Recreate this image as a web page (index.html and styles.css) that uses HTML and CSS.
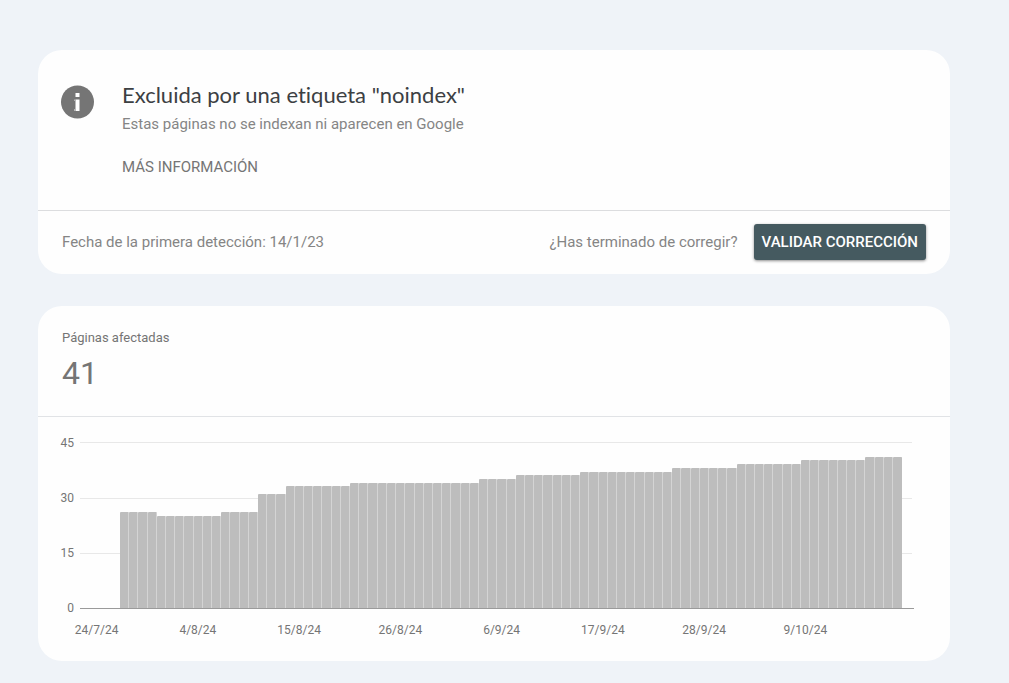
FILE: index.html
```html
<!DOCTYPE html>
<html lang="es">
<head>
<meta charset="utf-8">
<meta name="viewport" content="width=device-width, initial-scale=1">
<title>Excluida por una etiqueta "noindex"</title>
<link rel="stylesheet" href="styles.css">
</head>
<body>
<main class="page">
  <section class="card">
    <div class="issue">
      <svg class="issue-icon" viewBox="0 0 34 34" aria-hidden="true">
        <circle cx="16.5" cy="17" r="16.5" fill="#757575"/>
        <path d="M14.500 8h4v4h-4zM14.500 14.500h4V26h-4z" fill="#fff"/>
        <path d="M13 14.500h1.500V16H13zM13 24h1.500v2H13z" fill="#b5b5b5"/>
      </svg>
      <div class="issue-text">
        <h1 class="issue-title">Excluida por una etiqueta "noindex"</h1>
        <p class="issue-description">Estas páginas no se indexan ni aparecen en Google</p>
        <a class="more-link" href="#">MÁS INFORMACIÓN</a>
      </div>
    </div>
    <div class="validation">
      <span class="detected">Fecha de la primera detección: 14/1/23</span>
      <span>¿Has terminado de corregir?</span>
      <button class="validate-button" type="button">VALIDAR CORRECCIÓN</button>
    </div>
  </section>

  <section class="card">
    <div class="summary">
      <h2 class="summary-label">Páginas afectadas</h2>
      <p class="summary-value">41</p>
    </div>
    <div class="chart">
      <div class="chart-main">
        <div class="y-axis"><span>45</span><span>30</span><span>15</span><span>0</span></div>
        <div class="plot">
          <div class="bars" id="bars"></div>
        </div>
      </div>
      <div class="x-axis">
        <span>24/7/24</span><span>4/8/24</span><span>15/8/24</span><span>26/8/24</span>
        <span>6/9/24</span><span>17/9/24</span><span>28/9/24</span><span>9/10/24</span>
      </div>
    </div>
  </section>
</main>
<script src="chart.js"></script>
</body>
</html>
```
FILE: styles.css
```css
* {
  box-sizing: border-box;
}

body {
  margin: 0;
  background: #eff3f8;
  color: #757575;
  font-family: Roboto, "Liberation Sans", sans-serif;
  font-size: 15px;
  line-height: 20px;
}

h1, h2, p {
  margin: 0;
  font-weight: 400;
}

.page {
  display: flex;
  flex-direction: column;
  gap: 32px;
  padding: 50px 59px 22px 38px;
}

.card {
  background: #fefefe;
  border-radius: 24px;
}

.issue {
  display: flex;
  gap: 27px;
  padding: 32px 23px 33px;
  border-bottom: 1px solid #dcdddf;
}

.issue-icon {
  flex: none;
  width: 34px;
  height: 34px;
  margin-top: 3px;
}

.issue-title {
  color: #3c4043;
  font-family: Lato, Roboto, sans-serif;
  font-size: 22px;
  font-variant-ligatures: none;
  line-height: 26px;
}

.issue-description {
  margin-top: 6px;
  color: #858585;
}

.more-link {
  display: inline-block;
  margin-top: 23px;
  color: #757575;
  text-decoration: none;
}

.validation {
  display: flex;
  align-items: center;
  gap: 16px;
  padding: 13px 24px 14px;
  color: #858585;
}

.detected {
  flex: 1;
}

.validate-button {
  height: 36px;
  padding: 0 8px;
  border: 0;
  border-radius: 3px;
  background: #455a60;
  box-shadow: 0 1px 3px rgba(0, 0, 0, 0.45);
  color: #fff;
  font: 500 15px/34px Roboto, sans-serif;
}

.summary {
  padding: 22px 24px 23px;
  border-bottom: 1px solid #e1e3e6;
}

.summary-label {
  font-size: 13px;
}

.summary-value {
  margin-top: 5px;
  font-size: 32px;
  line-height: 40px;
}

.chart {
  padding: 16px 0 21px;
  font-size: 12px;
}

.chart-main {
  display: flex;
  gap: 6px;
  padding: 0 36px 0 16px;
}

.y-axis {
  display: flex;
  flex-direction: column;
  justify-content: space-between;
  width: 20px;
  text-align: right;
}

.plot {
  display: flex;
  flex: 1;
  height: 167px;
  margin: 9px 0;
  padding: 0 12px 0 40px;
  border-bottom: 1px solid #9a9a9a;
  background:
    linear-gradient(#e8e8e8, #e8e8e8) 0 0 / calc(100% - 2px) 1px no-repeat,
    linear-gradient(#e8e8e8, #e8e8e8) 0 56px / calc(100% - 2px) 1px no-repeat,
    linear-gradient(#e8e8e8, #e8e8e8) 0 111px / calc(100% - 2px) 1px no-repeat;
}

.bars {
  display: flex;
  flex: 1;
  align-items: flex-end;
}

.bar {
  flex: 1;
  border-right: 1px solid #d4d4d4;
  border-radius: 1px 1px 0 0;
  background: #bdbdbd;
}

.bar:last-child {
  border-right-color: #bdbdbd;
}

.x-axis {
  display: grid;
  grid-template-columns: repeat(8, 1fr);
  margin: 2px 94px 0 8px;
  text-align: center;
}
```
FILE: chart.js
```js
// Runs of consecutive days with the same number of affected pages: [days, pages]
const runs = [
  [4, 26], [7, 25], [4, 26], [3, 31], [7, 33], [14, 34], [4, 35],
  [7, 36], [10, 37], [7, 38], [7, 39], [7, 40], [4, 41]
];
const axisMax = 45;
const bars = document.getElementById("bars");

for (const [days, pages] of runs) {
  for (let day = 0; day < days; day++) {
    const bar = document.createElement("div");
    bar.className = "bar";
    bar.style.height = (pages / axisMax) * 100 + "%";
    bars.append(bar);
  }
}
```
